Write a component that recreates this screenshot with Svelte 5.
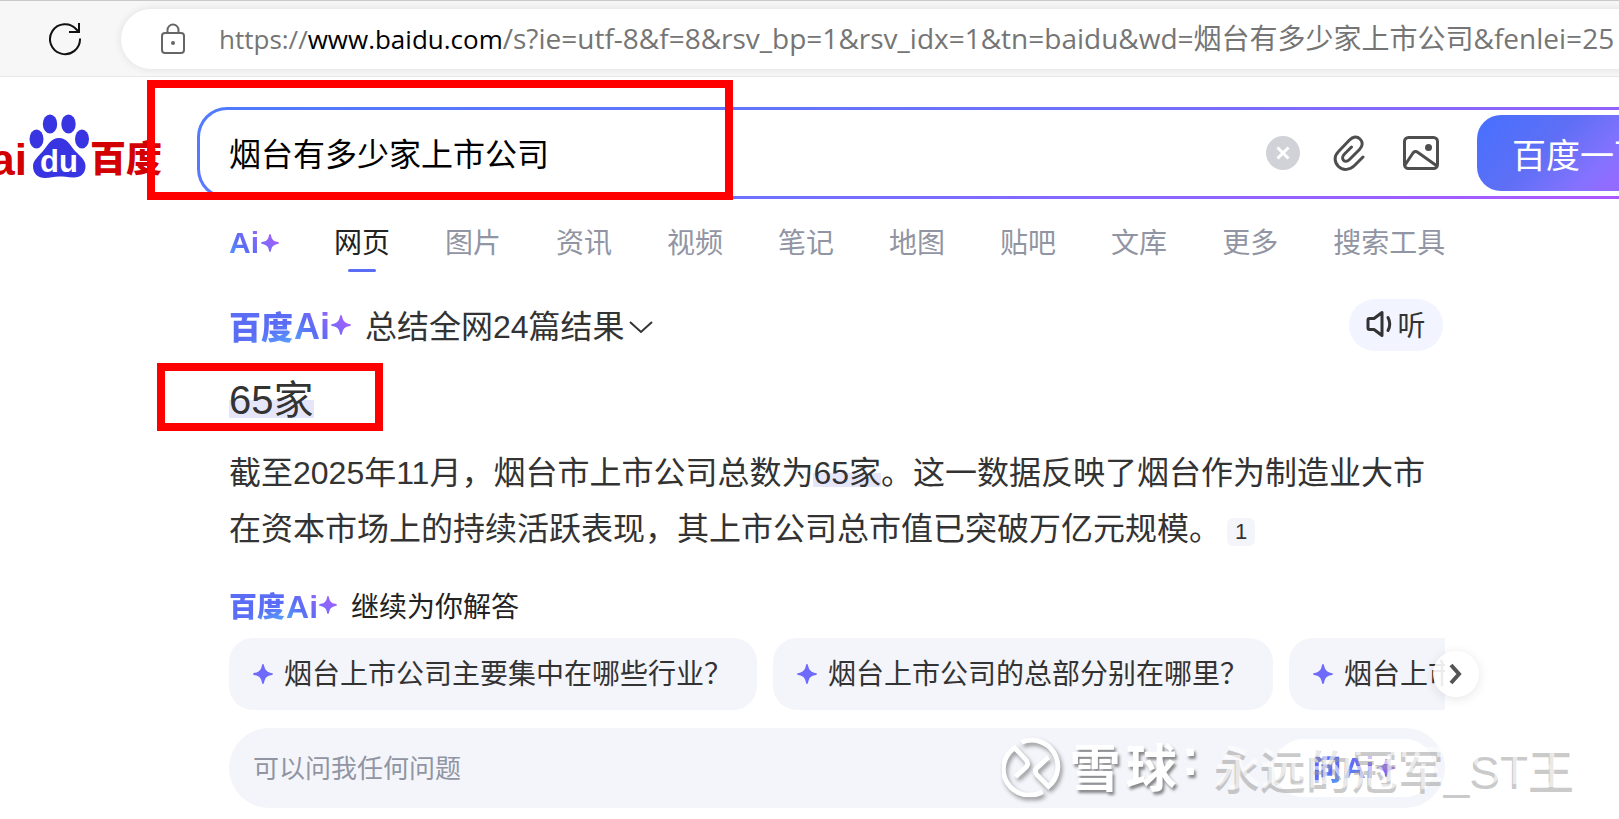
<script>
  let query = $state('烟台有多少家上市公司');
  let question = $state('');
  let activeTab = $state('网页');

  const tabs = ['网页', '图片', '资讯', '视频', '笔记', '地图', '贴吧', '文库', '更多', '搜索工具'];

  const suggestions = [
    '烟台上市公司主要集中在哪些行业？',
    '烟台上市公司的总部分别在哪里？',
    '烟台上市'
  ];
</script>

{#snippet star(size)}
  <svg class="star" width={size} height={size} viewBox="0 0 20 20" aria-hidden="true">
    <path d="M10 0C10.8 0 11 1 11.6 3.500 12.300 6 14 7.700 16.500 8.400 19 9 20 9.200 20 10S19 11 16.500 11.600C14 12.300 12.300 14 11.600 16.500 11 19 10.800 20 10 20S9 19 8.400 16.500C7.700 14 6 12.300 3.500 11.600 1 11 0 10.800 0 10S1 9 3.500 8.400C6 7.700 7.700 6 8.400 3.500 9 1 9.200 0 10 0Z" />
  </svg>
{/snippet}

<div class="page">
  <div class="toolbar">
    <button class="reload" aria-label="刷新">
      <svg width="34" height="34" viewBox="0 0 34 34" fill="none" stroke="#111" stroke-width="2">
        <path d="M32 16.500A15 15 0 1 1 28.500 7.500L31 10" />
        <path d="M31 1v9h-10" />
      </svg>
    </button>
    <div class="address">
      <svg width="26" height="32" viewBox="0 0 26 32" fill="none" stroke="#666" stroke-width="2">
        <rect x="2" y="10" width="22" height="20" rx="3" />
        <path d="M7.500 10V7a5.500 5.500 0 0 1 11 0v3" />
        <circle cx="13" cy="20" r="2" fill="#666" stroke="none" />
      </svg>
      <div class="url">https://<b>www.baidu.com</b><span>/s?ie=utf-8&amp;f=8&amp;rsv_bp=1&amp;rsv_idx=1&amp;tn=baidu&amp;wd=烟台有多少家上市公司&amp;fenlei=25</span></div>
    </div>
  </div>

  <div class="header">
    <svg class="logo" width="197" height="92" viewBox="0 0 197 92" role="img" aria-label="百度">
      <text class="logo-latin" x="27" y="68" text-anchor="end">Bai</text>
      <g fill="#3934e2">
        <ellipse cx="36.500" cy="32" rx="7" ry="9.500" />
        <ellipse cx="50" cy="17" rx="7.200" ry="9.500" />
        <ellipse cx="68.500" cy="17" rx="7.200" ry="9.500" />
        <ellipse cx="82" cy="32" rx="7" ry="9.500" />
        <path d="M59 31C67 31 70 38 75 44 80 49 86 53 85.500 60 85 67 80 71 73 70.500 67 70 64 69.500 59 69.500S50 71 45 71C38 71 33 67 33 59 33 53 39 49 43 44 48 38 51 31 59 31Z" />
      </g>
      <text class="logo-du" x="59" y="65" text-anchor="middle">du</text>
      <text class="logo-cn" x="90" y="65">百度</text>
    </svg>
    <form class="search" onsubmit={(e) => e.preventDefault()}>
      <input type="text" aria-label="搜索" bind:value={query} />
      <button type="button" class="icon" aria-label="清空" onclick={() => (query = '')}>
        <svg width="34" height="34" viewBox="0 0 34 34">
          <circle cx="17" cy="17" r="17" fill="#d1d2d8" />
          <path d="M11.500 11.500l11 11m0-11l-11 11" stroke="#fff" stroke-width="3" />
        </svg>
      </button>
      <button type="button" class="icon clip" aria-label="附件">
        <svg width="36" height="36" viewBox="0 0 36 36" fill="none" stroke="#4e4e4e" stroke-width="3" stroke-linecap="round" stroke-linejoin="round">
          <path d="M32 22L23.500 30.500C19 35 12 36 7.500 31.500S3 21 7.500 16.500L18.500 5C22 1.500 26 1 29 4S32 11 28.500 14.500L18.500 24.500C16.500 26.500 14 26.800 12.500 25.200S11.500 21 13.500 19L20.500 12" />
        </svg>
      </button>
      <button type="button" class="icon" aria-label="图片搜索">
        <svg width="36" height="36" viewBox="0 0 36 36" fill="none" stroke="#4e4e4e" stroke-width="3" stroke-linejoin="round">
          <rect x="1.500" y="2.500" width="33" height="31" rx="4" />
          <path d="M2 30L10 18C11.500 16 13 16 15 17.500L34 31" />
          <circle cx="25.500" cy="12.500" r="3.500" fill="#4e4e4e" stroke="none" />
        </svg>
      </button>
      <button type="submit" class="submit">百度一下</button>
    </form>
  </div>

  <div class="content">
    <nav class="tabs">
      <a class="ai-tab" href="#ai"><span class="ai">Ai</span>{@render star(18)}</a>
      {#each tabs as tab}
        <a class="tab" class:active={tab === activeTab} href="#{tab}" onclick={() => (activeTab = tab)}>{tab}</a>
      {/each}
    </nav>

    <div class="summary">
      <span class="brand"><span class="cn">百度</span><span class="ai">Ai</span>{@render star(20)}</span>
      <button class="toggle">
        总结全网24篇结果
        <svg width="24" height="14" viewBox="0 0 24 14" fill="none" stroke="#333" stroke-width="2"><path d="M1 2l11 10L23 2" /></svg>
      </button>
      <button class="listen">
        <svg width="28" height="28" viewBox="0 0 28 28" fill="none" stroke="#333" stroke-width="3" stroke-linejoin="round" stroke-linecap="round">
          <path d="M3.500 8.500H8L16 2.500V25.500L8 19.500H3.500Q2 19.500 2 18V10Q2 8.500 3.500 8.500Z" />
          <path d="M22 7.500Q25.500 14 22 20.500" />
        </svg>听
      </button>
    </div>

    <h1><mark>65家</mark></h1>
    <p>
      截至2025年11月，烟台市上市公司总数为<mark>65家</mark>。这一数据反映了烟台作为制造业大市在资本市场上的持续活跃表现，其上市公司总市值已突破万亿元规模。<a class="ref" href="#ref1">1</a>
    </p>

    <div class="more">
      <span class="brand small"><span class="cn">百度</span><span class="ai">Ai</span>{@render star(18)}</span>
      继续为你解答
    </div>

    <div class="carousel">
      <div class="chips">
        {#each suggestions as text}
          <button class="chip">{@render star(20)}<span>{text}</span></button>
        {/each}
      </div>
      <button class="next" aria-label="下一个">
        <svg width="14" height="22" viewBox="0 0 14 22" fill="none" stroke="#555" stroke-width="4"><path d="M2 2l8 9-8 9" /></svg>
      </button>
    </div>

    <form class="ask" onsubmit={(e) => e.preventDefault()}>
      <input type="text" aria-label="提问" placeholder="可以问我任何问题" bind:value={question} />
      <button class="ask-button"><span class="cn">问</span><span class="ai">Ai</span>{@render star(18)}</button>
    </form>
  </div>

  <div class="frame frame-query"></div>
  <div class="frame frame-answer"></div>

  <div class="watermark">
    <svg width="60" height="60" viewBox="0 0 62 62" fill="none" stroke="#fff" stroke-width="5">
      <path d="M20 5.500A27 27 0 0 1 48 51L36 39Q33 35 36 32L48 21" />
      <path d="M42 56.500A27 27 0 0 1 13 11L25 24Q28 28 25 31L14 41" />
    </svg>
    <span class="site"><span>雪</span><span>球</span><span>:</span></span>
    <span class="author">永远的冠军_ST王</span>
  </div>
</div>

<svg class="defs" width="0" height="0" aria-hidden="true">
  <linearGradient id="violet" x1="0" y1="1" x2="1" y2="0">
    <stop offset="0" stop-color="#6b6dff" />
    <stop offset="1" stop-color="#b05cf5" />
  </linearGradient>
</svg>

<style>
  :global(body) {
    margin: 0;
    background: #fff;
  }

  .page {
    position: relative;
    overflow: hidden;
    padding-bottom: 11px;
    color: #333;
    font-family: "Liberation Sans", "Noto Sans CJK SC", sans-serif;
  }

  button,
  input {
    border: none;
    padding: 0;
    background: none;
    color: inherit;
    font-family: inherit;
    outline: none;
  }

  button {
    cursor: pointer;
  }

  a {
    color: inherit;
    text-decoration: none;
  }

  svg {
    flex: none;
  }

  .defs {
    position: absolute;
  }

  /* browser toolbar */
  .toolbar {
    display: flex;
    align-items: center;
    box-sizing: border-box;
    height: 77px;
    padding-left: 48px;
    background: #f7f7f7;
    border-top: 1px solid #c9c9c9;
    border-bottom: 1px solid #e9e9e9;
  }

  .reload {
    display: flex;
    margin-right: 39px;
  }

  .address {
    display: flex;
    flex: 1;
    align-items: center;
    gap: 33px;
    height: 60px;
    margin-right: -40px;
    padding-left: 39px;
    background: #fff;
    border-radius: 30px;
    box-shadow: 0 0 8px rgba(0, 0, 0, 0.1);
  }

  .url {
    color: #757575;
    font-family: "Open Sans", "Noto Sans CJK SC", sans-serif;
    font-size: 26px;
    line-height: 40px;
    white-space: nowrap;
  }

  .url b {
    color: #000;
    font-weight: 400;
  }

  .url span {
    font-size: 28px;
  }

  /* search header */
  .header {
    display: flex;
    margin: 30px -74px 0 0;
  }

  .logo-latin {
    fill: #d20000;
    font-size: 44px;
    font-weight: 700;
  }

  .logo-du {
    fill: #fff;
    font-size: 31px;
    font-weight: 700;
  }

  .logo-cn {
    fill: #d20000;
    font-family: "Noto Sans CJK SC", sans-serif;
    font-size: 36px;
    font-weight: 900;
  }

  .search {
    display: flex;
    flex: 1;
    align-items: center;
    box-sizing: border-box;
    height: 92px;
    padding: 0 5px 0 29px;
    border: 3px solid transparent;
    border-radius: 30px;
    background:
      linear-gradient(#fff, #fff) padding-box,
      linear-gradient(165deg, #4e7bff, #7070ff 50%, #b255ff) border-box;
  }

  .search input {
    flex: 1;
    min-width: 0;
    padding-top: 4px;
    color: #000;
    font-size: 32px;
    line-height: 48px;
  }

  .icon {
    display: flex;
    margin-right: 38px;
  }

  .icon.clip {
    margin: 0 36px 0 -7px;
  }

  .submit {
    width: 208px;
    height: 76px;
    padding-right: 2px;
    border-radius: 24px;
    background: linear-gradient(135deg, #4670ff, #5e6ff5 35%, #8472ff 60%, #b45cff);
    color: #fff;
    font-size: 34px;
  }

  .content {
    margin: 0 174px 0 229px;
  }

  /* tabs */
  .tabs {
    display: flex;
    gap: 55px;
    height: 49px;
    margin-top: 24px;
    color: #9195a3;
    font-size: 28px;
    line-height: 42px;
    white-space: nowrap;
  }

  .tab {
    display: flex;
    flex-direction: column;
    align-items: center;
  }

  .tab.active {
    color: #222;
  }

  .tab.active::after {
    content: "";
    width: 28px;
    height: 3px;
    margin-top: 4px;
    border-radius: 2px;
    background: #5b6cf5;
  }

  .ai-tab {
    display: flex;
    align-items: center;
    gap: 2px;
    width: 53px;
    height: 40px;
  }

  .star {
    fill: url(#violet);
  }

  .ai,
  .cn {
    background: linear-gradient(45deg, #55adff, #5b6cf5 45%, #a763f8);
    background-clip: text;
    color: transparent;
    font-size: 30px;
    font-weight: 700;
  }

  .cn {
    background: linear-gradient(160deg, #5b6cf5 60%, #55adff);
    background-clip: text;
    font-weight: 900;
  }

  .brand {
    display: flex;
    align-items: center;
    gap: 1px;
  }

  .brand .ai {
    padding-top: 4px;
    font-size: 36px;
  }

  .brand .cn {
    font-size: 32px;
  }

  .brand.small .ai {
    font-size: 32px;
  }

  .brand.small .cn {
    font-size: 28px;
  }

  /* answer */
  .summary {
    display: flex;
    align-items: center;
    gap: 14px;
    height: 52px;
    margin-top: 27px;
  }

  .toggle {
    display: flex;
    align-items: center;
    gap: 4px;
    padding-top: 4px;
    font-size: 32px;
    line-height: 48px;
  }

  .listen {
    display: flex;
    align-items: center;
    justify-content: center;
    gap: 3px;
    width: 94px;
    height: 52px;
    margin-left: auto;
    margin-right: 2px;
    padding-bottom: 2px;
    border-radius: 26px;
    background: #f2f5ff;
    font-size: 28px;
  }

  h1 {
    margin: 21px 0 17px;
    font-size: 40px;
    font-weight: 400;
    line-height: 56px;
  }

  mark {
    background: linear-gradient(transparent 50%, #e6e6fb 50%, #e6e6fb 90%, transparent 90%);
    color: inherit;
  }

  p {
    margin: 0;
    font-size: 32px;
    line-height: 56px;
  }

  .ref {
    display: inline-block;
    width: 28px;
    margin-left: 6px;
    border-radius: 6px;
    background: #f4f5fa;
    font-size: 22px;
    line-height: 28px;
    text-align: center;
    vertical-align: 1px;
  }

  .more {
    display: flex;
    align-items: center;
    gap: 14px;
    height: 40px;
    margin-top: 28px;
    color: #222;
    font-size: 28px;
  }

  /* suggested questions */
  .carousel {
    position: relative;
    margin-top: 13px;
  }

  .chips {
    display: flex;
    gap: 16px;
    overflow: hidden;
  }

  .chip {
    display: flex;
    flex: none;
    align-items: center;
    gap: 11px;
    height: 72px;
    padding: 0 25px 0 24px;
    border-radius: 24px;
    background: #f4f5fa;
    font-size: 28px;
    white-space: nowrap;
  }

  .chip span {
    padding-bottom: 4px;
  }

  .chip .star {
    fill: #6f6bfa;
  }

  .next {
    position: absolute;
    top: 13px;
    right: -34px;
    display: flex;
    align-items: center;
    justify-content: center;
    width: 46px;
    height: 46px;
    border-radius: 50%;
    background: rgba(255, 255, 255, 0.9);
    box-shadow: 0 2px 12px rgba(0, 0, 0, 0.1);
  }

  .ask {
    display: flex;
    align-items: center;
    height: 80px;
    margin-top: 18px;
    padding: 0 11px 0 24px;
    border-radius: 40px;
    background: #f4f5fa;
  }

  .ask input {
    flex: 1;
    padding-top: 2px;
    font-size: 26px;
    line-height: 40px;
  }

  .ask input::placeholder {
    color: #9195a3;
    opacity: 1;
  }

  .ask-button {
    display: flex;
    align-items: center;
    justify-content: center;
    gap: 3px;
    width: 160px;
    height: 58px;
    border-radius: 29px;
    background: #fff;
  }

  .ask-button .cn {
    font-size: 28px;
  }

  /* marks drawn over the page */
  .frame {
    position: absolute;
    box-sizing: border-box;
    border: 8px solid #f00;
  }

  .frame-query {
    top: 80px;
    left: 147px;
    width: 586px;
    height: 120px;
  }

  .frame-answer {
    top: 363px;
    left: 157px;
    width: 226px;
    height: 68px;
  }

  .watermark {
    position: absolute;
    right: 44px;
    bottom: 20px;
    display: flex;
    align-items: center;
    height: 64px;
    color: #fff;
    white-space: nowrap;
    pointer-events: none;
  }

  .watermark svg {
    margin-right: 8px;
    filter: drop-shadow(2px 3px 2px rgba(0, 0, 0, 0.4));
  }

  .site {
    display: flex;
    gap: 5px;
    margin-right: 16px;
    padding-bottom: 4px;
    font-size: 51px;
    font-weight: 700;
    text-shadow: 2px 3px 3px rgba(0, 0, 0, 0.45);
  }

  .author {
    padding-bottom: 6px;
    color: rgba(255, 255, 255, 0.6);
    font-size: 46px;
    font-weight: 500;
    text-shadow: -1px 5px 0 rgba(150, 150, 150, 0.5);
  }
</style>
